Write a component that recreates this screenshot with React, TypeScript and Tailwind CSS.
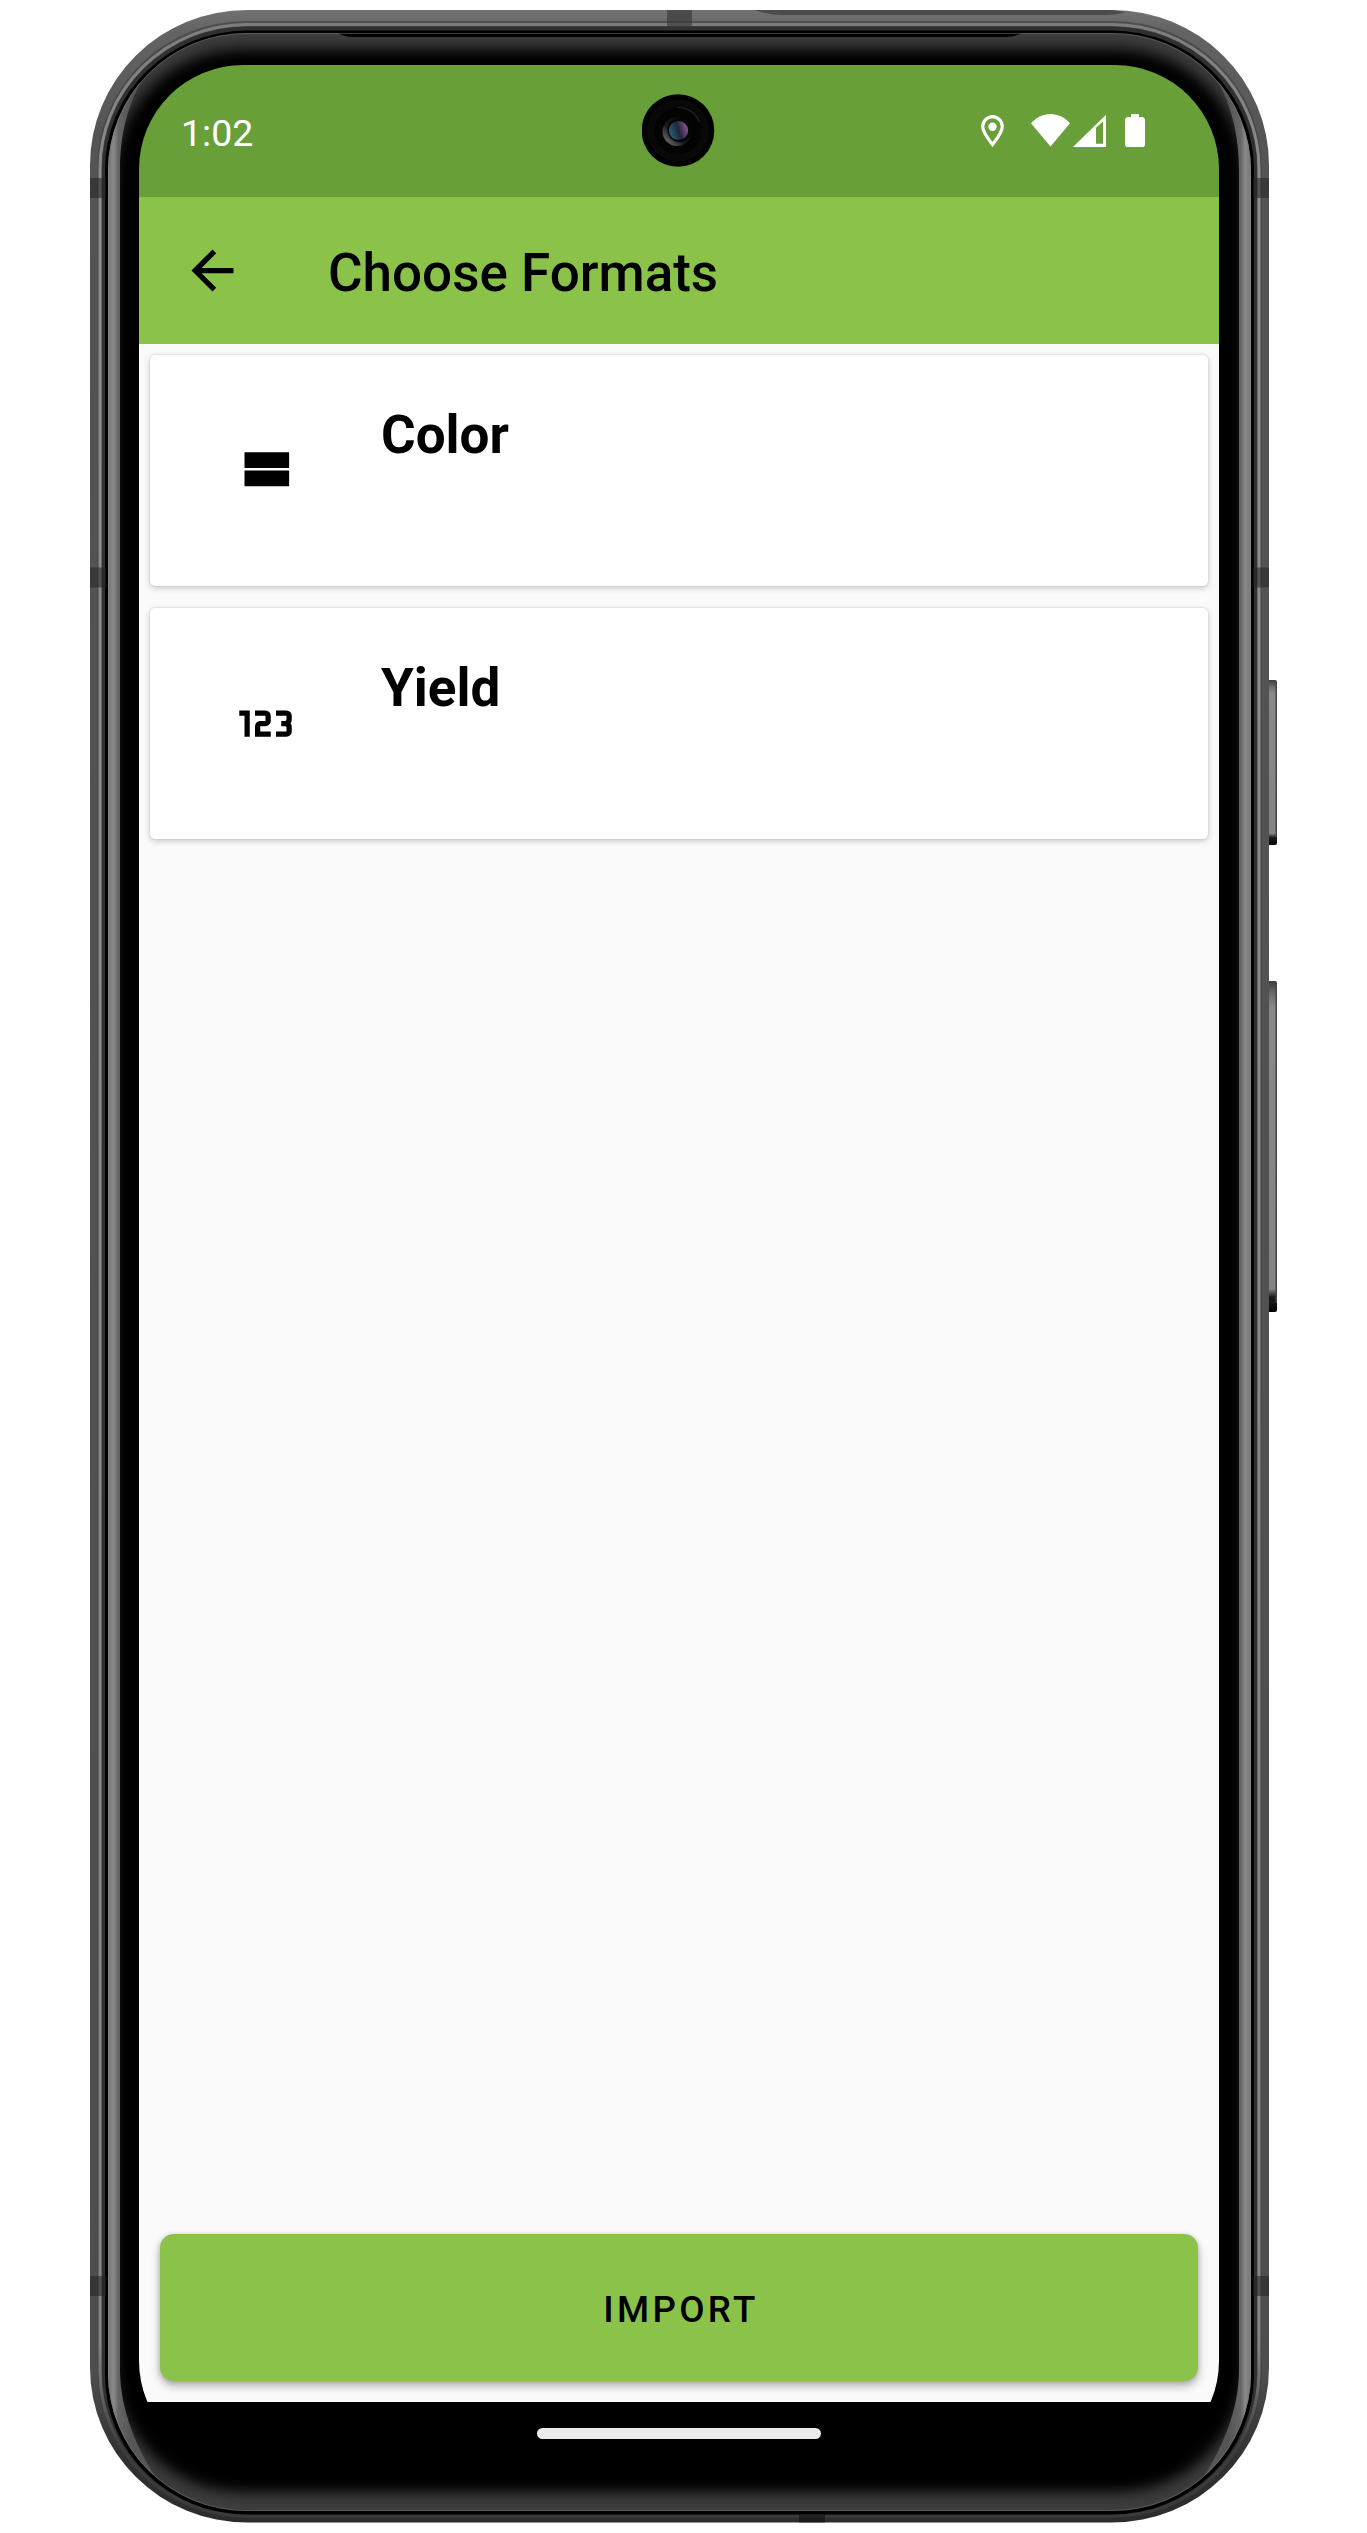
import type { ReactNode } from "react";

/** Metal rim, glass edge and side buttons of the handset. */
function DeviceFrame() {
  const sideBands = [178, 567.5, 2276];
  return (
    <svg className="absolute inset-0" width="1367" height="2533" viewBox="0 0 1367 2533" aria-hidden="true">
      <defs>
        <linearGradient id="rim" x1="0" y1="10" x2="0" y2="2523" gradientUnits="userSpaceOnUse">
          <stop offset="0" stopColor="#727272" />
          <stop offset="0.008" stopColor="#646464" />
          <stop offset="0.05" stopColor="#545454" />
          <stop offset="0.94" stopColor="#4e4e4e" />
          <stop offset="0.975" stopColor="#303030" />
          <stop offset="1" stopColor="#2c2c2c" />
        </linearGradient>
        <linearGradient id="ridge" x1="0" y1="10" x2="0" y2="2523" gradientUnits="userSpaceOnUse">
          <stop offset="0" stopColor="#7c7c7c" />
          <stop offset="0.07" stopColor="#8c8c8c" />
          <stop offset="0.93" stopColor="#848484" />
          <stop offset="0.97" stopColor="#3c3c3c" />
          <stop offset="1" stopColor="#3a3a3a" />
        </linearGradient>
        <linearGradient id="shine" x1="108" y1="0" x2="1251" y2="0" gradientUnits="userSpaceOnUse">
          <stop offset="0" stopColor="#9a9a9a" />
          <stop offset="0.0012" stopColor="#7a7a7a" />
          <stop offset="0.005" stopColor="#8a8a8a" />
          <stop offset="0.009" stopColor="#666666" />
          <stop offset="0.02" stopColor="#555555" />
          <stop offset="0.98" stopColor="#555555" />
          <stop offset="0.991" stopColor="#666666" />
          <stop offset="0.995" stopColor="#8a8a8a" />
          <stop offset="0.9988" stopColor="#7a7a7a" />
          <stop offset="1" stopColor="#9a9a9a" />
        </linearGradient>
        <linearGradient id="key" x1="0" y1="0" x2="0" y2="1">
          <stop offset="0" stopColor="#3c3c3c" />
          <stop offset="0.04" stopColor="#6c6c6c" />
          <stop offset="0.08" stopColor="#888888" />
          <stop offset="0.93" stopColor="#848484" />
          <stop offset="0.955" stopColor="#1a1a1a" />
          <stop offset="1" stopColor="#050505" />
        </linearGradient>
        <filter id="soft" x="-5%" y="-5%" width="110%" height="110%">
          <feGaussianBlur stdDeviation="7" />
        </filter>
        <clipPath id="glass">
          <rect x="108" y="33" width="1143" height="2478" rx="138" ry="138" />
        </clipPath>
      </defs>

      <g>
        <rect x="1266" y="680" width="11" height="165" rx="2" fill="url(#key)" />
        <rect x="1275.5" y="682" width="1.5" height="155" fill="#444" />
        <rect x="1266" y="981" width="11" height="331" rx="2" fill="url(#key)" />
        <rect x="1275.5" y="983" width="1.5" height="320" fill="#444" />
      </g>

      <rect x="90" y="10" width="1179" height="2512.5" rx="157" ry="155" fill="url(#rim)" />
      <path d="M754 10H1112L1126 12Q1118 15 1104 15H784Q768 15 754 10Z" fill="#4c4c4c" />
      <rect x="97.5" y="21" width="1164" height="2497" rx="149" ry="146" fill="#3a3a3a" opacity="0.55" />
      <rect x="100" y="24.5" width="1159" height="2491.5" rx="147" ry="144" fill="none" stroke="url(#ridge)" strokeWidth="3" />
      <rect x="102" y="26.5" width="1155" height="2488" rx="145" ry="142" fill="#303030" />
      <rect x="105" y="30.5" width="1149" height="2484" rx="142" ry="139" fill="#000" />

      {sideBands.map((y) => (
        <g key={y} fill="#222" opacity="0.55">
          <rect x="90" y={y} width="16" height="20" />
          <rect x="1253" y={y} width="16" height="20" />
        </g>
      ))}
      <rect x="667" y="10" width="25" height="20" fill="#333" opacity="0.6" />
      <rect x="799" y="2515" width="26" height="7.5" fill="#111" opacity="0.6" />

      <g clipPath="url(#glass)">
        <rect x="108" y="33" width="1143" height="2478" fill="#3c3c3c" />
        <rect x="114" y="49" width="1131" height="2443" rx="128" fill="#000" filter="url(#soft)" />
        <path
          d="M100 180C100 110 120 80 146 60L152 62C132 94 120 125 120 170V2370C120 2410 137 2450 159 2482L150 2484C120 2450 100 2420 100 2370Z"
          fill="url(#shine)"
        />
        <path
          d="M1259 180C1259 110 1239 80 1213 60L1207 62C1227 94 1239 125 1239 170V2370C1239 2410 1222 2450 1200 2482L1209 2484C1239 2450 1259 2420 1259 2370Z"
          fill="url(#shine)"
        />
        <path d="M338 30V33Q344 37 354 37H1006Q1014 37 1022 33V30Z" fill="#000" />
      </g>
      <rect x="108.5" y="33.5" width="1142" height="2477" rx="137.5" fill="none" stroke="#777" strokeOpacity="0.5" />
    </svg>
  );
}

function Camera() {
  return (
    <svg className="absolute left-[503px] top-[29px]" width="73" height="73" viewBox="0 0 73 73" aria-hidden="true">
      <defs>
        <linearGradient id="lens" x1="0" y1="0.6" x2="1" y2="0.3">
          <stop offset="0" stopColor="#25637a" />
          <stop offset="0.5" stopColor="#252338" />
          <stop offset="1" stopColor="#8a5c9c" />
        </linearGradient>
        <linearGradient id="lensRing" x1="0" y1="1" x2="0.8" y2="0.2">
          <stop offset="0" stopColor="#8a8a8a" />
          <stop offset="0.5" stopColor="#1c1c1c" />
          <stop offset="1" stopColor="#050505" />
        </linearGradient>
      </defs>
      <circle cx="36" cy="36.5" r="36.3" fill="#000" />
      <circle cx="36" cy="36.5" r="31" fill="#080808" />
      <circle cx="36" cy="37" r="23.5" fill="#030303" />
      <path d="M35.5 13.500A23 23 0 0 1 57.500 28" fill="none" stroke="#242424" strokeWidth="1.2" />
      <circle cx="35" cy="37.500" r="14.500" fill="url(#lensRing)" />
      <circle cx="37.500" cy="36" r="12" fill="#050505" />
      <circle cx="36.500" cy="36.500" r="9.600" fill="url(#lens)" />
    </svg>
  );
}

function StatusBar() {
  return (
    <div className="flex h-[132px] shrink-0 items-start bg-[#689f38] pl-[42px] pr-[74px] text-white">
      <span className="mt-[46px] text-[37.500px] leading-[44px]">1:02</span>
      <div className="ml-auto mt-[49px] flex h-[33px] items-start">
        <svg width="24" height="33" viewBox="0 0 24 33" aria-hidden="true">
          <path d="M11.500 2.600A9.900 9.900 0 0 1 21.300 12.500C21.300 18.500 15 26 11.500 30.500C8 26 1.700 18.500 1.700 12.500A9.900 9.900 0 0 1 11.500 2.600Z" fill="none" stroke="#fff" strokeWidth="3.200" />
          <circle cx="11.500" cy="12.700" r="4.200" fill="#fff" />
        </svg>
        <svg className="ml-[26px]" width="39" height="33" viewBox="0 0 39 33" aria-hidden="true">
          <path d="M19.500 32.500L0 9.300C5 3.500 12 0 19.500 0S34 3.500 39 9.300Z" fill="#fff" />
        </svg>
        <svg className="ml-[3px]" width="33" height="33" viewBox="0 0 33 33" aria-hidden="true">
          <path fillRule="evenodd" d="M0 33L33 0.800V33ZM23 13.800V29.800H30V7.400Z" fill="#fff" />
        </svg>
        <svg className="ml-[19px]" width="20" height="33" viewBox="0 0 20 33" aria-hidden="true">
          <path d="M6 0H14V3H18L20 5V31.500L18.500 33H1.500L0 31.500V5L2 3H6Z" fill="#fff" />
        </svg>
      </div>
    </div>
  );
}

function AppBar() {
  return (
    <header className="flex h-[147px] shrink-0 items-center bg-[#8bc34a] pl-[42px]">
      <svg className="size-[63px]" viewBox="0 0 24 24" aria-hidden="true">
        <path d="M20 11H7.830l5.590-5.590L12 4l-8 8 8 8 1.410-1.410L7.830 13H20v-2z" />
      </svg>
      <h1 className="ml-[84px] mt-[5px] text-[53px] font-medium leading-[62px]">Choose Formats</h1>
    </header>
  );
}

function FormatCard({ title, icon }: { title: string; icon: ReactNode }) {
  return (
    <article className="flex h-[231px] rounded-[5px] bg-white shadow-[0_2px_6px_rgba(0,0,0,0.2),0_0_2px_rgba(0,0,0,0.15)]">
      <div className="flex w-[231px] justify-center pr-px pt-[84px]">{icon}</div>
      <h2 className="pt-[49px] text-[53px] font-bold leading-[62px]">{title}</h2>
    </article>
  );
}

const streamIcon = (
  <svg className="size-[63px]" viewBox="0 0 24 24" aria-hidden="true">
    <path d="M4 18h17v-6H4v6zM4 5v6h17V5H4z" />
  </svg>
);

const numericIcon = (
  <svg className="size-[63px]" viewBox="0 0 24 24" fill="none" stroke="#000" strokeWidth="2" aria-hidden="true">
    <path d="M2 8H5V17" />
    <path d="M8 8H12a1 1 0 0 1 1 1v2a1 1 0 0 1-1 1H10a1 1 0 0 0-1 1V16H14" />
    <path d="M16 8H20a1 1 0 0 1 1 1V10.500Q21 12 19.500 12H18M19.500 12Q21 12 21 13.500V15a1 1 0 0 1-1 1H16" />
  </svg>
);

export default function App() {
  return (
    <div className="relative h-[2533px] w-[1367px] overflow-hidden bg-white pl-[139px] pt-[65px] font-['Roboto',sans-serif] text-black">
      <DeviceFrame />
      <div className="relative flex h-[2400px] w-[1080px] flex-col overflow-hidden rounded-[104px]">
        <StatusBar />
        <AppBar />
        <main className="flex flex-1 flex-col bg-[#fafafa]">
          <div className="flex flex-col gap-[22px] px-[11px] pt-[11px]">
            <FormatCard title="Color" icon={streamIcon} />
            <FormatCard title="Yield" icon={numericIcon} />
          </div>
          <button className="mx-[21px] mb-[21px] mt-auto h-[147px] rounded-[14px] bg-[#8bc34a] pl-[4px] pt-[5px] text-[36.750px] font-medium tracking-[0.0892em] shadow-[0_5px_10px_rgba(0,0,0,0.28),0_1px_5px_rgba(0,0,0,0.16)]">
            IMPORT
          </button>
        </main>
        <nav className="flex h-[63px] shrink-0 justify-center bg-black pt-[26px]">
          <div className="h-[11px] w-[284px] rounded-full bg-[#ebebeb]" />
        </nav>
        <Camera />
      </div>
    </div>
  );
}
